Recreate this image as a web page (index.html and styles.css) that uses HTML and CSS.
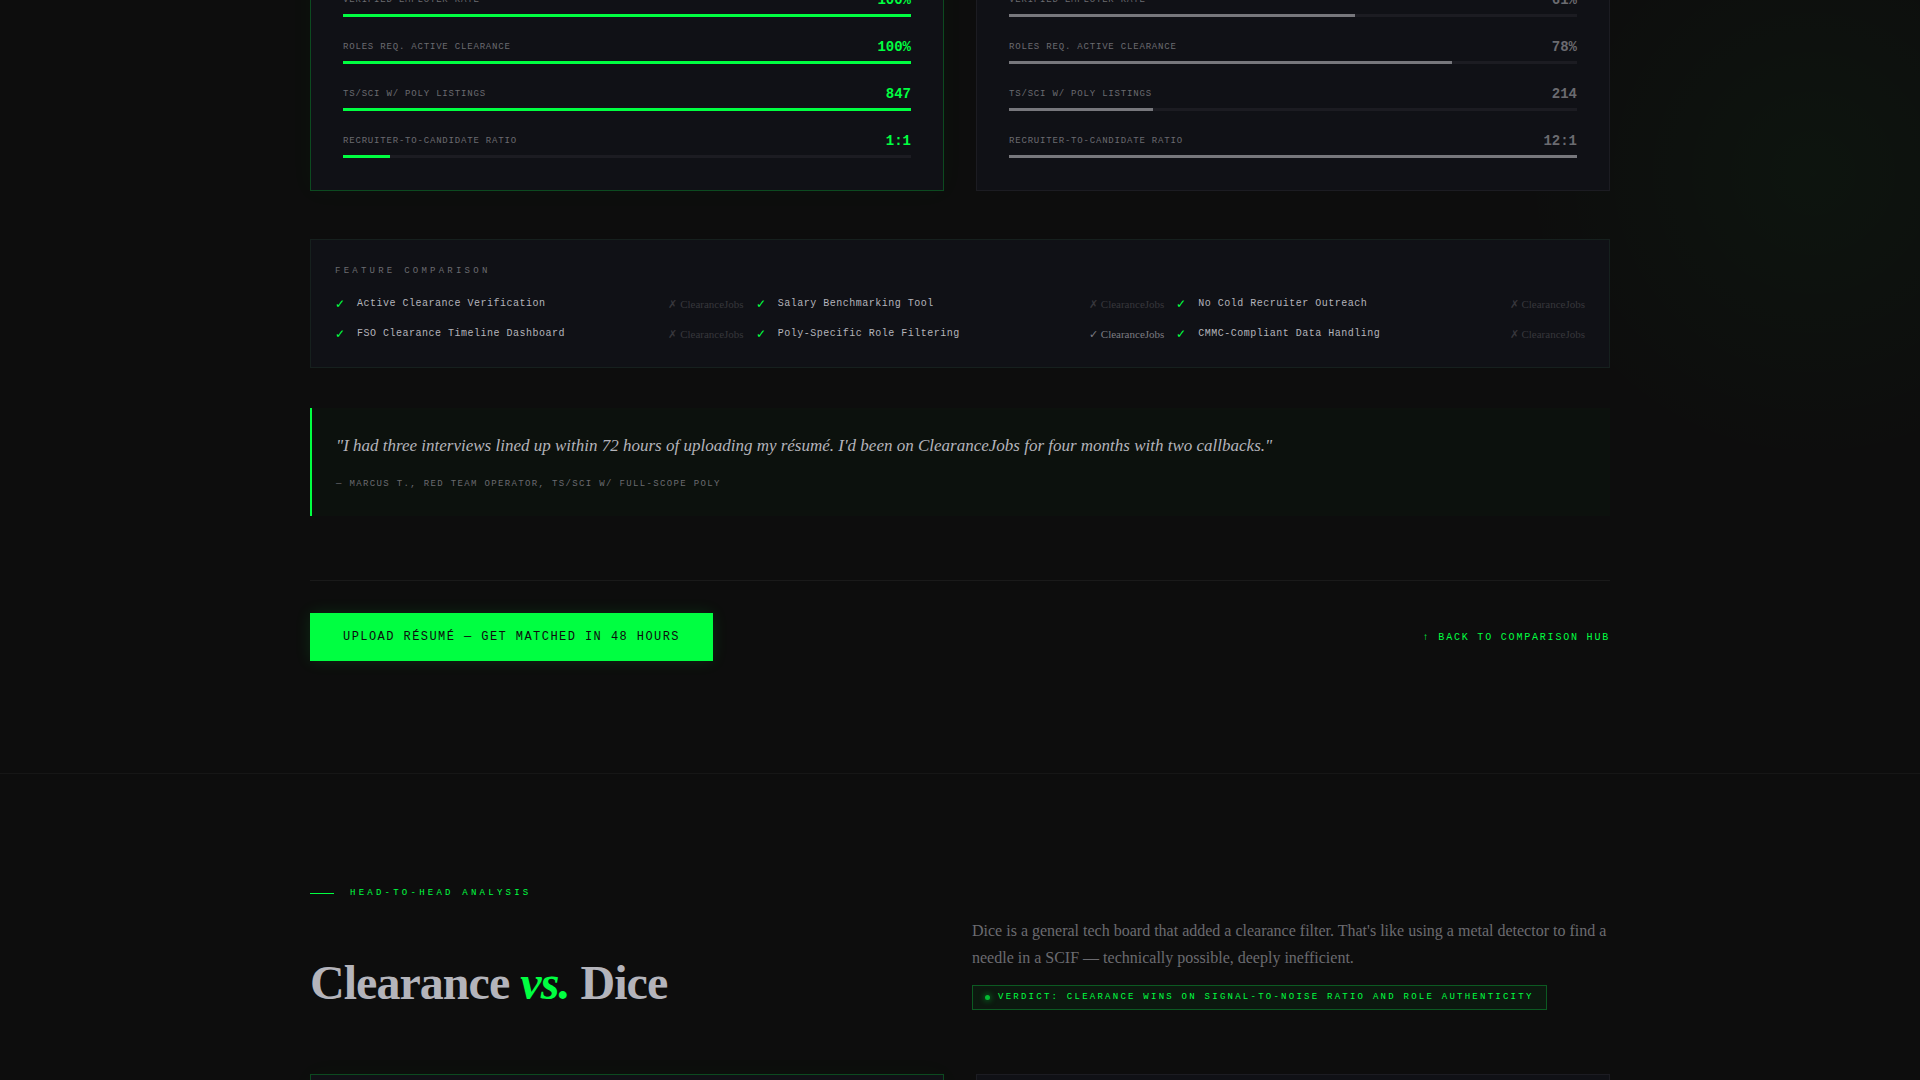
FILE: index.html
```html
<!DOCTYPE html>
<html lang="en">
<head>
    <meta charset="UTF-8">
    <meta name="viewport" content="width=device-width, initial-scale=1.0">
    <title>Clearance vs. ClearanceJobs vs. Dice</title>
    <link rel="stylesheet" href="styles.css">
</head>
<body>
    <!-- Clearance vs. ClearanceJobs -->
    <section class="compare compare-first">
        <div class="glow"></div>
        <div class="container">
            <div class="cards">
                <div class="card card-us">
                    <div class="metric">
                        <div class="metric-row"><span class="metric-label">Verified Employer Rate</span><span class="metric-value">100%</span></div>
                        <div class="bar"><div class="bar-fill" style="width: 100%"></div></div>
                    </div>
                    <div class="metric">
                        <div class="metric-row"><span class="metric-label">Roles Req. Active Clearance</span><span class="metric-value">100%</span></div>
                        <div class="bar"><div class="bar-fill" style="width: 100%"></div></div>
                    </div>
                    <div class="metric">
                        <div class="metric-row"><span class="metric-label">TS/SCI w/ Poly Listings</span><span class="metric-value">847</span></div>
                        <div class="bar"><div class="bar-fill" style="width: 100%"></div></div>
                    </div>
                    <div class="metric">
                        <div class="metric-row"><span class="metric-label">Recruiter-to-Candidate Ratio</span><span class="metric-value">1:1</span></div>
                        <div class="bar"><div class="bar-fill" style="width: 8.3%"></div></div>
                    </div>
                </div>
                <div class="card">
                    <div class="metric">
                        <div class="metric-row"><span class="metric-label">Verified Employer Rate</span><span class="metric-value">61%</span></div>
                        <div class="bar"><div class="bar-fill" style="width: 61%"></div></div>
                    </div>
                    <div class="metric">
                        <div class="metric-row"><span class="metric-label">Roles Req. Active Clearance</span><span class="metric-value">78%</span></div>
                        <div class="bar"><div class="bar-fill" style="width: 78%"></div></div>
                    </div>
                    <div class="metric">
                        <div class="metric-row"><span class="metric-label">TS/SCI w/ Poly Listings</span><span class="metric-value">214</span></div>
                        <div class="bar"><div class="bar-fill" style="width: 25.3%"></div></div>
                    </div>
                    <div class="metric">
                        <div class="metric-row"><span class="metric-label">Recruiter-to-Candidate Ratio</span><span class="metric-value">12:1</span></div>
                        <div class="bar"><div class="bar-fill" style="width: 100%"></div></div>
                    </div>
                </div>
            </div>

            <div class="features">
                <h3 class="features-title">Feature Comparison</h3>
                <ul class="features-grid">
                    <li class="feature"><span class="check">✓</span><span class="feature-name">Active Clearance Verification</span><span class="rival">✗ ClearanceJobs</span></li>
                    <li class="feature"><span class="check">✓</span><span class="feature-name">Salary Benchmarking Tool</span><span class="rival">✗ ClearanceJobs</span></li>
                    <li class="feature"><span class="check">✓</span><span class="feature-name">No Cold Recruiter Outreach</span><span class="rival">✗ ClearanceJobs</span></li>
                    <li class="feature"><span class="check">✓</span><span class="feature-name">FSO Clearance Timeline Dashboard</span><span class="rival">✗ ClearanceJobs</span></li>
                    <li class="feature"><span class="check">✓</span><span class="feature-name">Poly-Specific Role Filtering</span><span class="rival rival-yes">✓ ClearanceJobs</span></li>
                    <li class="feature"><span class="check">✓</span><span class="feature-name">CMMC-Compliant Data Handling</span><span class="rival">✗ ClearanceJobs</span></li>
                </ul>
            </div>

            <blockquote class="quote">
                <p class="quote-text">"I had three interviews lined up within 72 hours of uploading my résumé. I'd been on ClearanceJobs for four months with two callbacks."</p>
                <cite class="quote-cite">— Marcus T., Red Team Operator, TS/SCI w/ Full-Scope Poly</cite>
            </blockquote>

            <div class="cta">
                <button type="button" class="btn">Upload Résumé — Get Matched in 48 Hours</button>
                <a href="#hub" class="back-link">↑ Back to Comparison Hub</a>
            </div>
        </div>
    </section>

    <!-- Clearance vs. Dice -->
    <section class="compare">
        <div class="container">
            <div class="eyebrow">Head-to-Head Analysis</div>
            <div class="header">
                <h2 class="title">Clearance <em>vs.</em> Dice</h2>
                <div>
                    <p class="lead">Dice is a general tech board that added a clearance filter. That's like using a metal detector to find a needle in a SCIF — technically possible, deeply inefficient.</p>
                    <div class="verdict">Verdict: Clearance wins on signal-to-noise ratio and role authenticity</div>
                </div>
            </div>
            <div class="cards">
                <div class="card card-us"></div>
                <div class="card"></div>
            </div>
        </div>
    </section>
</body>
</html>
```

FILE: styles.css
```css
:root {
    --bg: #0d0d0d;
    --card: #101116;
    --green: #00ff41;
    --text: #b4b4bb;
    --muted: #6b6b70;
    --mono: "Liberation Mono", "Courier New", monospace;
    --serif: "Liberation Serif", "Times New Roman", serif;
}

* {
    margin: 0;
    padding: 0;
    box-sizing: border-box;
}

body {
    height: 100vh;
    overflow: hidden;
    background: var(--bg);
    color: var(--text);
    font-family: var(--serif);
    font-size: 16px;
}

.compare {
    position: relative;
    padding: 112px 32px;
    overflow: hidden;
    border-bottom: 1px solid #161616;
}

/* scrolled partway into the first comparison */
.compare-first {
    margin-top: -155px;
}

.container {
    position: relative;
    max-width: 1300px;
    margin: 0 auto;
}

.glow {
    position: absolute;
    top: 28px;
    right: -193px;
    width: 600px;
    height: 600px;
    background: radial-gradient(circle, rgba(0, 255, 65, 0.03) 0%, transparent 70%);
}

/* Metric cards */
.cards {
    display: grid;
    grid-template-columns: 1fr 1fr;
    gap: 32px;
}

.card {
    display: flex;
    flex-direction: column;
    gap: 20px;
    padding: 32px;
    background: var(--card);
    border: 1px solid #1c1c22;
}

.card-us {
    border-color: #0c4a20;
    box-shadow: 0 0 24px rgba(0, 255, 65, 0.03);
}

.metric-row {
    display: flex;
    justify-content: space-between;
    align-items: center;
    margin-bottom: 4px;
    line-height: 20px;
    font-family: var(--mono);
}

.metric-label {
    font-size: 9px;
    letter-spacing: 0.09em;
    text-transform: uppercase;
    color: var(--muted);
}

.metric-value {
    font-size: 14px;
    font-weight: bold;
    color: var(--muted);
}

.card-us .metric-value {
    color: var(--green);
}

.bar {
    height: 3px;
    background: #1c1c22;
}

.bar-fill {
    height: 100%;
    background: #77777c;
}

.card-us .bar-fill {
    background: var(--green);
}

/* Feature comparison */
.features {
    margin-top: 48px;
    padding: 24px;
    background: var(--card);
    border: 1px solid #16201e;
}

.features-title {
    margin-bottom: 16px;
    font-family: var(--mono);
    font-size: 9px;
    font-weight: normal;
    line-height: 15px;
    letter-spacing: 0.36em;
    text-transform: uppercase;
    color: var(--muted);
}

.features-grid {
    display: grid;
    grid-template-columns: repeat(3, 1fr);
    gap: 12px;
    list-style: none;
}

.feature {
    display: flex;
    align-items: center;
    gap: 12px;
    line-height: 18px;
}

.check {
    font-size: 12px;
    color: var(--green);
}

.feature-name {
    font-family: var(--mono);
    font-size: 10px;
    letter-spacing: 0.05em;
}

.rival {
    margin-left: auto;
    font-size: 11px;
    color: #37373c;
}

.rival-yes {
    color: #7c7c82;
}

/* Quote */
.quote {
    margin-top: 40px;
    padding: 24px;
    background: #0c110d;
    border-left: 2px solid var(--green);
}

.quote-text {
    margin-bottom: 16px;
    font-size: 17px;
    font-style: italic;
    line-height: 28px;
}

.quote-cite {
    display: block;
    font-family: var(--mono);
    font-size: 9px;
    font-style: normal;
    line-height: 16px;
    letter-spacing: 0.15em;
    text-transform: uppercase;
    color: var(--muted);
}

/* Call to action */
.cta {
    display: flex;
    justify-content: space-between;
    align-items: center;
    margin-top: 64px;
    padding-top: 32px;
    border-top: 1px solid #1a1a1a;
}

.btn {
    padding: 15px 32px;
    border: 1px solid var(--green);
    background: var(--green);
    color: var(--bg);
    font-family: var(--mono);
    font-size: 12px;
    line-height: 16px;
    letter-spacing: 0.12em;
    text-transform: uppercase;
    box-shadow: 0 0 16px rgba(0, 255, 65, 0.12);
    cursor: pointer;
}

.back-link {
    font-family: var(--mono);
    font-size: 10px;
    letter-spacing: 0.18em;
    text-transform: uppercase;
    text-decoration: none;
    color: var(--green);
}

/* Section header */
.eyebrow {
    display: flex;
    align-items: center;
    gap: 16px;
    margin-bottom: 17px;
    font-family: var(--mono);
    font-size: 9px;
    line-height: 14px;
    letter-spacing: 0.36em;
    text-transform: uppercase;
    color: var(--green);
}

.eyebrow::before {
    content: "";
    width: 24px;
    height: 1px;
    background: var(--green);
}

.header {
    display: grid;
    grid-template-columns: 1fr 1fr;
    gap: 24px;
    align-items: end;
    margin-bottom: 64px;
}

.title {
    font-size: 48px;
    line-height: 55px;
    letter-spacing: -0.02em;
}

.title em {
    color: var(--green);
}

.lead {
    margin-bottom: 14px;
    line-height: 27px;
    color: var(--muted);
}

.verdict {
    display: inline-flex;
    align-items: center;
    gap: 8px;
    padding: 5px 12px;
    background: rgba(0, 255, 65, 0.05);
    border: 1px solid #0c5a22;
    font-family: var(--mono);
    font-size: 9px;
    line-height: 13px;
    letter-spacing: 0.25em;
    text-transform: uppercase;
    color: var(--green);
}

.verdict::before {
    content: "";
    width: 5px;
    height: 5px;
    border-radius: 50%;
    background: var(--green);
    box-shadow: 0 0 6px var(--green);
    opacity: 0.7;
}
```
